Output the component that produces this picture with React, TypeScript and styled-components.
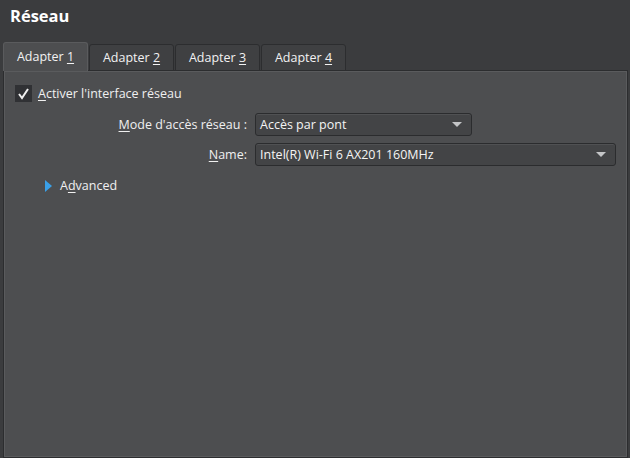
import React from "react";
import styled, { createGlobalStyle } from "styled-components";

const Global = createGlobalStyle`
  html, body { margin: 0; padding: 0; background: #3b3c3e; }
  body { font-family: "Open Sans", "Noto Sans", sans-serif; }
`;

const Page = styled.div`
  width: 630px;
  height: 458px;
  background: #3b3c3e;
  display: flex;
  flex-direction: column;
  box-sizing: border-box;
  padding: 0 2px 0 3px;
  color: #f0f0f0;
`;

const Title = styled.h1`
  margin: 0;
  padding: 4px 0 0 7px;
  height: 42px;
  box-sizing: border-box;
  font-family: "Open Sans", sans-serif;
  font-weight: 700;
  font-size: 16.5px;
  color: #ffffff;
`;

const TabBar = styled.div`
  display: flex;
  align-items: flex-end;
  gap: 1px;
  height: 29px;
  position: relative;
  z-index: 1;
  margin-bottom: -1px;
`;

const Tab = styled.div<{ $active?: boolean }>`
  box-sizing: border-box;
  width: 85px;
  height: ${(p) => (p.$active ? 29 : 27)}px;
  background: ${(p) => (p.$active ? "#4d4e50" : "#3f4042")};
  border: 1px solid ${(p) => (p.$active ? "#5a5b5d" : "#2c2d2f")};
  border-bottom: ${(p) => (p.$active ? "none" : "1px solid #2c2d2f")};
  border-radius: 3px 3px 0 0;
  display: flex;
  align-items: center;
  justify-content: center;
  font-size: 12.5px;
  color: #f2f2f2;
  padding-bottom: ${(p) => (p.$active ? 2 : 0)}px;
`;

const U = styled.span`
  text-decoration: underline;
  text-underline-offset: 2px;
`;

const Panel = styled.div`
  flex: 1;
  background: #4d4e50;
  border: 1px solid #2c2d2f;
  box-shadow: inset 1px 1px 0 #5a5b5d, inset -1px -1px 0 #5a5b5d;
  padding: 14px 11px 0 11px;
  display: flex;
  flex-direction: column;
`;

const CheckRow = styled.label`
  display: flex;
  align-items: center;
  gap: 6px;
  font-size: 12.5px;
  height: 17px;
`;

const CheckBox = styled.span`
  width: 17px;
  height: 17px;
  background: #303134;
  display: flex;
  align-items: center;
  justify-content: center;
`;

const FormGrid = styled.div`
  display: grid;
  grid-template-columns: 232px auto;
  column-gap: 8px;
  row-gap: 7px;
  margin-top: 11px;
  align-items: center;
`;

const FieldLabel = styled.span`
  font-size: 12.5px;
  text-align: right;
`;

const Select = styled.div<{ $width: number }>`
  box-sizing: border-box;
  width: ${(p) => p.$width}px;
  height: 23px;
  background: #434446;
  border: 1px solid #2b2c2e;
  border-radius: 3px;
  box-shadow: inset 0 1px 0 #505153;
  display: flex;
  align-items: center;
  justify-content: space-between;
  padding: 0 9px 0 4px;
  font-size: 12.5px;
  color: #f4f4f4;
`;

const Arrow = styled.span`
  width: 0;
  height: 0;
  border-left: 5px solid transparent;
  border-right: 5px solid transparent;
  border-top: 5px solid #c4c5c7;
`;

const Advanced = styled.div`
  display: flex;
  align-items: center;
  gap: 8px;
  margin: 11px 0 0 30px;
  font-size: 12.5px;
`;

const Triangle = styled.span`
  width: 0;
  height: 0;
  border-top: 6px solid transparent;
  border-bottom: 6px solid transparent;
  border-left: 7px solid #3aa0e8;
`;

export default function App() {
  return (
    <>
      <Global />
      <Page>
        <Title>Réseau</Title>
        <TabBar>
          <Tab $active>
            Adapter&nbsp;<U>1</U>
          </Tab>
          <Tab>
            Adapter&nbsp;<U>2</U>
          </Tab>
          <Tab>
            Adapter&nbsp;<U>3</U>
          </Tab>
          <Tab>
            Adapter&nbsp;<U>4</U>
          </Tab>
        </TabBar>
        <Panel>
          <CheckRow>
            <CheckBox>
              <svg width="13" height="13" viewBox="0 0 13 13">
                <path d="M2 7 L5 11 L11 2" fill="none" stroke="#f0f0f0" strokeWidth="2" />
              </svg>
            </CheckBox>
            <span>
              <U>A</U>ctiver l'interface réseau
            </span>
          </CheckRow>
          <FormGrid>
            <FieldLabel>
              <U>M</U>ode d'accès réseau :
            </FieldLabel>
            <Select $width={217}>
              Accès par pont
              <Arrow />
            </Select>
            <FieldLabel>
              <U>N</U>ame:
            </FieldLabel>
            <Select $width={361}>
              Intel(R) Wi-Fi 6 AX201 160MHz
              <Arrow />
            </Select>
          </FormGrid>
          <Advanced>
            <Triangle />
            <span>
              A<U>d</U>vanced
            </span>
          </Advanced>
        </Panel>
      </Page>
    </>
  );
}
